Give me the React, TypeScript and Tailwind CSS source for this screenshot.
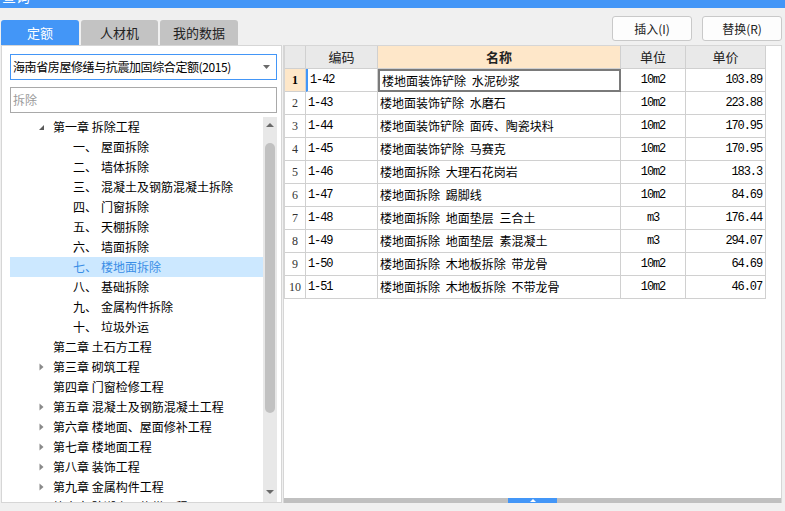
import React from "react";

const tree: { t: string; n?: string; level: 0 | 1; icon?: "open" | "closed" | "none"; sel?: boolean }[] = [
  { t: "第一章 拆除工程", level: 0, icon: "open" },
  { t: "一、", n: "屋面拆除", level: 1 },
  { t: "二、", n: "墙体拆除", level: 1 },
  { t: "三、", n: "混凝土及钢筋混凝土拆除", level: 1 },
  { t: "四、", n: "门窗拆除", level: 1 },
  { t: "五、", n: "天棚拆除", level: 1 },
  { t: "六、", n: "墙面拆除", level: 1 },
  { t: "七、", n: "楼地面拆除", level: 1, sel: true },
  { t: "八、", n: "基础拆除", level: 1 },
  { t: "九、", n: "金属构件拆除", level: 1 },
  { t: "十、", n: "垃圾外运", level: 1 },
  { t: "第二章 土石方工程", level: 0, icon: "none" },
  { t: "第三章 砌筑工程", level: 0, icon: "closed" },
  { t: "第四章 门窗检修工程", level: 0, icon: "none" },
  { t: "第五章 混凝土及钢筋混凝土工程", level: 0, icon: "closed" },
  { t: "第六章 楼地面、屋面修补工程", level: 0, icon: "closed" },
  { t: "第七章 楼地面工程", level: 0, icon: "closed" },
  { t: "第八章 装饰工程", level: 0, icon: "closed" },
  { t: "第九章 金属构件工程", level: 0, icon: "closed" },
  { t: "第十章 防潮房屋修缮工程", level: 0, icon: "closed" },
];

const rows = [
  ["1-42", "楼地面装饰铲除 水泥砂浆", "10m2", "103.89"],
  ["1-43", "楼地面装饰铲除 水磨石", "10m2", "223.88"],
  ["1-44", "楼地面装饰铲除 面砖、陶瓷块料", "10m2", "170.95"],
  ["1-45", "楼地面装饰铲除 马赛克", "10m2", "170.95"],
  ["1-46", "楼地面拆除 大理石花岗岩", "10m2", "183.3"],
  ["1-47", "楼地面拆除 踢脚线", "10m2", "84.69"],
  ["1-48", "楼地面拆除 地面垫层 三合土", "m3", "176.44"],
  ["1-49", "楼地面拆除 地面垫层 素混凝土", "m3", "294.07"],
  ["1-50", "楼地面拆除 木地板拆除 带龙骨", "10m2", "64.69"],
  ["1-51", "楼地面拆除 木地板拆除 不带龙骨", "10m2", "46.07"],
];

const cjk = "font-['Microsoft_YaHei','Noto_Sans_CJK_SC',sans-serif]";
const mono = "font-['Liberation_Mono','Noto_Sans_CJK_SC',monospace] tracking-[-1.1px]";

function TreeIcon({ kind }: { kind?: "open" | "closed" | "none" }) {
  if (kind === "open")
    return (
      <svg width="7" height="7" viewBox="0 0 7 7" className="shrink-0">
        <path d="M6 1 L6 6 L1 6 Z" fill="#5a5a5a" />
      </svg>
    );
  if (kind === "closed")
    return (
      <svg width="7" height="8" viewBox="0 0 7 8" className="shrink-0">
        <path d="M1.5 0.5 L5.5 4 L1.5 7.5 Z" fill="#8a8a8a" />
      </svg>
    );
  return <span className="w-[7px] shrink-0" />;
}

export default function App() {
  return (
    <div className={`w-[785px] h-[511px] bg-[#f0f0f0] flex flex-col overflow-hidden ${cjk}`}>
      <div className="h-[8px] bg-[#4396f7] overflow-hidden shrink-0">
        <div className="text-white text-[14px] leading-[14px] -mt-[11px] pl-[2px]">查询</div>
      </div>
      <div className="flex flex-1 min-h-0">
        {/* Left column */}
        <div className="w-[282px] pl-[1px] pt-[12px] flex flex-col shrink-0">
          <div className="flex h-[25px] gap-[2px] shrink-0">
            <div className="w-[78px] rounded-t-[3px] bg-[#4396f7] text-white text-[13px] flex items-center justify-center">定额</div>
            <div className="w-[77px] rounded-t-[3px] bg-[#c3c3c3] text-[#222] text-[13px] flex items-center justify-center">人材机</div>
            <div className="w-[78px] rounded-t-[3px] bg-[#c3c3c3] text-[#222] text-[13px] flex items-center justify-center">我的数据</div>
          </div>
          <div className="h-[458px] bg-white border border-[#d6d6d6] flex flex-col pl-[8px] pr-[3px] pt-[8px] overflow-hidden">
            <div className="h-[26px] w-[267px] border border-[#4396f7] flex items-center justify-between pl-[2px] pr-[6px] shrink-0">
              <span className="text-[12px] tracking-[-0.4px] text-black whitespace-nowrap">海南省房屋修缮与抗震加固综合定额(2015)</span>
              <svg width="7" height="4" viewBox="0 0 7 4"><path d="M0 0 L7 0 L3.5 4 Z" fill="#6a6a6a" /></svg>
            </div>
            <div className="mt-[7px] h-[26px] w-[267px] border border-[#a9a9a9] flex items-center pl-[2px] shrink-0">
              <span className="text-[12px] text-[#9a9a9a]">拆除</span>
            </div>
            <div className="mt-[4px] flex flex-1 min-h-0 w-[267px]">
              <div className="flex-1 overflow-hidden">
                {tree.map((r, i) => (
                  <div
                    key={i}
                    className={`h-[20px] flex items-center text-[12px] whitespace-nowrap ${r.sel ? "bg-[#cce8ff] text-[#3a8ee6]" : "text-black"}`}
                  >
                    {r.level === 0 ? (
                      <div className="flex items-center pl-[28px] gap-[8px]">
                        <TreeIcon kind={r.icon} />
                        <span>{r.t}</span>
                      </div>
                    ) : (
                      <div className="flex items-center pl-[63px]">
                        <span className="w-[28px]">{r.t}</span>
                        <span>{r.n}</span>
                      </div>
                    )}
                  </div>
                ))}
              </div>
              <div className="w-[14px] bg-[#e8e8e8] flex flex-col items-center shrink-0">
                <div className="h-[10px] flex items-end">
                  <svg width="8" height="4" viewBox="0 0 8 4"><path d="M0 4 L8 4 L4 0 Z" fill="#6a6a6a" /></svg>
                </div>
                <div className="mt-[16px] w-[10px] h-[270px] rounded-[5px] bg-[#c1c1c1]" />
                <div className="flex-1" />
                <div className="h-[10px] flex items-start mb-[2px]">
                  <svg width="8" height="4" viewBox="0 0 8 4"><path d="M0 0 L8 0 L4 4 Z" fill="#6a6a6a" /></svg>
                </div>
              </div>
            </div>
          </div>
        </div>

        {/* Right column */}
        <div className="w-[499px] ml-[1px] pt-[8px] flex flex-col shrink-0">
          <div className="h-[25px] flex justify-end gap-[10px] shrink-0">
            <button className="w-[80px] h-[25px] rounded-[3px] border border-[#c9c9c9] bg-[#fdfdfd] text-[12px] text-[#222]">插入(I)</button>
            <button className="w-[80px] h-[25px] rounded-[3px] border border-[#c9c9c9] bg-[#fdfdfd] text-[12px] text-[#222]">替换(R)</button>
          </div>
          <div className="mt-[4px] h-[458px] bg-white border-l border-r border-t border-[#d6d6d6] flex flex-col">
            <div className="flex-1 min-h-0">
              <div className="grid grid-cols-[21px_72px_243px_65px_80px] w-[481px] border-l border-[#d4d4d4]">
                <div className="h-[23px] bg-[#e9e9e9] border-r border-b border-[#d0d0d0]" />
                <div className="h-[23px] bg-[#e9e9e9] border-r border-b border-[#d0d0d0] flex items-center justify-center text-[13px] text-[#222]">编码</div>
                <div className="h-[23px] bg-[#fee7c9] border-r border-b border-[#d0d0d0] flex items-center justify-center text-[13px] font-bold text-[#222]">名称</div>
                <div className="h-[23px] bg-[#e9e9e9] border-r border-b border-[#d0d0d0] flex items-center justify-center text-[13px] text-[#222]">单位</div>
                <div className="h-[23px] bg-[#e9e9e9] border-r border-b border-[#d0d0d0] flex items-center justify-center text-[13px] text-[#222]">单价</div>
                {rows.map((r, i) => {
                  const sel = i === 0;
                  return (
                    <React.Fragment key={i}>
                      <div
                        className={`h-[23px] border-r border-b border-[#d0d0d0] flex items-center justify-center text-[12px] font-['Liberation_Serif',serif] ${sel ? "bg-[#fee7c9] font-bold text-black" : "bg-white text-[#333]"}`}
                      >
                        {i + 1}
                      </div>
                      <div
                        className={`h-[23px] border-r border-b border-[#d0d0d0] flex items-center pl-[2px] text-[12px] text-black ${mono} ${sel ? "border-l-2 border-l-[#4396f7] pl-0" : ""}`}
                      >
                        {r[0]}
                      </div>
                      <div
                        className={`h-[23px] flex items-center pl-[2px] text-[12px] text-black whitespace-nowrap [word-spacing:3px] ${sel ? "border-2 border-[#7a7a7a] pl-[1px]" : "border-r border-b border-[#d0d0d0]"}`}
                      >
                        {r[1]}
                      </div>
                      <div className={`h-[23px] border-r border-b border-[#d0d0d0] flex items-center justify-center text-[12px] text-black ${mono}`}>
                        {r[2]}
                      </div>
                      <div className={`h-[23px] border-r border-b border-[#d0d0d0] flex items-center justify-end pr-[3px] text-[12px] text-black ${mono}`}>
                        {r[3]}
                      </div>
                    </React.Fragment>
                  );
                })}
              </div>
            </div>
            <div className="h-[5px] bg-[#c0c0c0] flex justify-center shrink-0">
              <div className="w-[49px] h-[5px] bg-[#4396f7] flex items-center justify-center">
                <svg width="6" height="3" viewBox="0 0 6 3"><path d="M0 3 L6 3 L3 0 Z" fill="#fff" /></svg>
              </div>
            </div>
          </div>
        </div>
      </div>
    </div>
  );
}
